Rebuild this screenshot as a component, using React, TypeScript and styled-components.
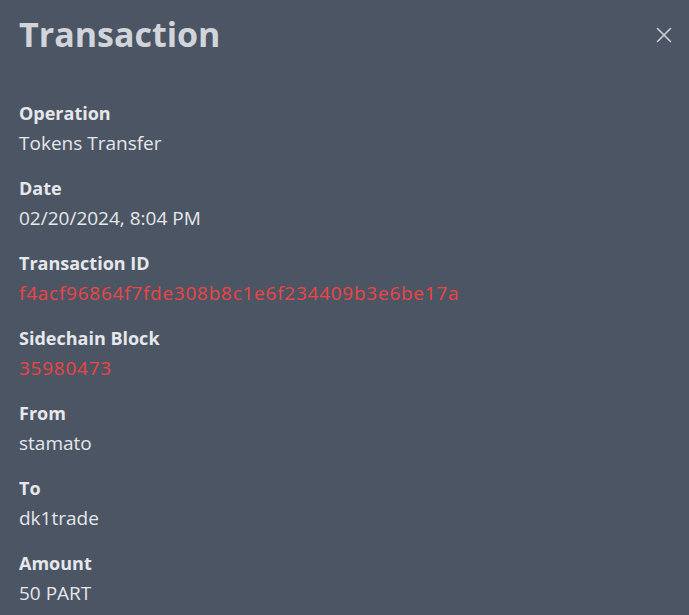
import React from "react";
import styled, { createGlobalStyle } from "styled-components";

const Global = createGlobalStyle`
  html, body { margin: 0; padding: 0; background: #4b5563; }
  body { font-family: "Open Sans", "Noto Sans", sans-serif; }
`;

const Panel = styled.div`
  width: 689px;
  height: 615px;
  box-sizing: border-box;
  background: #4b5563;
  padding: 12px 17px 0 19px;
  overflow: hidden;
  color: #e5e7eb;
`;

const Header = styled.div`
  display: flex;
  justify-content: space-between;
  align-items: flex-start;
`;

const Title = styled.h1`
  margin: 0;
  font-size: 34px;
  line-height: 44px;
  font-weight: 700;
  color: #d1d5db;
`;

const Close = styled.button`
  background: none;
  border: none;
  padding: 0;
  margin: 15px 0 0 0;
  width: 16px;
  height: 16px;
  display: flex;
  align-items: center;
  justify-content: center;
  color: #d1d5db;
  cursor: pointer;
`;

const List = styled.dl`
  margin: 43px 0 0 0;
  display: flex;
  flex-direction: column;
  gap: 17px;
`;

const Item = styled.div`
  display: flex;
  flex-direction: column;
  gap: 2px;
`;

const Label = styled.dt`
  font-size: 18px;
  line-height: 28px;
  font-weight: 700;
  color: #e5e7eb;
`;

const Value = styled.dd<{ $accent?: boolean }>`
  margin: 0;
  font-size: 19px;
  line-height: 28px;
  font-weight: 400;
  letter-spacing: ${(p) => (p.$accent ? "0.75px" : "0")};
  color: ${(p) => (p.$accent ? "#ef4444" : "#e5e7eb")};
`;

const rows: { label: string; value: string; accent?: boolean }[] = [
  { label: "Operation", value: "Tokens Transfer" },
  { label: "Date", value: "02/20/2024, 8:04 PM" },
  { label: "Transaction ID", value: "f4acf96864f7fde308b8c1e6f234409b3e6be17a", accent: true },
  { label: "Sidechain Block", value: "35980473", accent: true },
  { label: "From", value: "stamato" },
  { label: "To", value: "dk1trade" },
  { label: "Amount", value: "50 PART" },
];

export default function App() {
  return (
    <>
      <Global />
      <Panel>
        <Header>
          <Title>Transaction</Title>
          <Close aria-label="Close">
            <svg width="16" height="16" viewBox="0 0 16 16" fill="none">
              <path d="M1.5 1.5L14.5 14.5M14.5 1.5L1.5 14.5" stroke="currentColor" strokeWidth="1.5" strokeLinecap="round" />
            </svg>
          </Close>
        </Header>
        <List>
          {rows.map((r) => (
            <Item key={r.label}>
              <Label>{r.label}</Label>
              <Value $accent={r.accent}>{r.value}</Value>
            </Item>
          ))}
        </List>
      </Panel>
    </>
  );
}
